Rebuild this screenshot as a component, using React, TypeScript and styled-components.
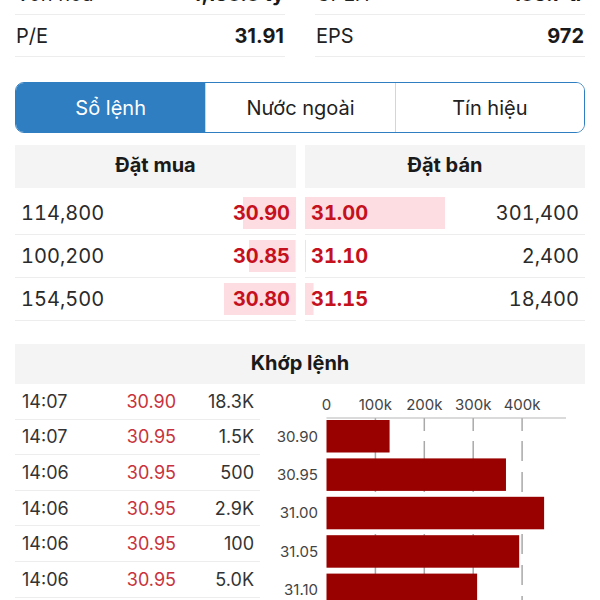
import React from 'react';
import styled, { createGlobalStyle } from 'styled-components';

const GlobalStyle = createGlobalStyle`
  html, body {
    margin: 0;
    padding: 0;
    background: #fff;
    overflow: hidden;
  }
  body {
    font-family: Inter, "Noto Sans", sans-serif;
    color: #222;
  }
`;

type Level = { price: string; volume: number };
type Match = { time: string; price: string; volume: string };

const stats = [
  [
    { label: 'Vốn hóa', value: '4,153.3 tỷ' },
    { label: 'CPLH', value: '135.7 tr' },
  ],
  [
    { label: 'P/E', value: '31.91' },
    { label: 'EPS', value: '972' },
  ],
];

const tabs = ['Sổ lệnh', 'Nước ngoài', 'Tín hiệu'];

const bids: Level[] = [
  { price: '30.90', volume: 114800 },
  { price: '30.85', volume: 100200 },
  { price: '30.80', volume: 154500 },
];

const asks: Level[] = [
  { price: '31.00', volume: 301400 },
  { price: '31.10', volume: 2400 },
  { price: '31.15', volume: 18400 },
];

const matches: Match[] = [
  { time: '14:07', price: '30.90', volume: '18.3K' },
  { time: '14:07', price: '30.95', volume: '1.5K' },
  { time: '14:06', price: '30.95', volume: '500' },
  { time: '14:06', price: '30.95', volume: '2.9K' },
  { time: '14:06', price: '30.95', volume: '100' },
  { time: '14:06', price: '30.95', volume: '5.0K' },
];

const histogram = [
  { price: '30.90', volume: 129000 },
  { price: '30.95', volume: 367000 },
  { price: '31.00', volume: 445000 },
  { price: '31.05', volume: 394000 },
  { price: '31.10', volume: 308000 },
  { price: '31.15', volume: 120000 },
];

const Page = styled.div`
  margin-top: -27px;
  padding: 0 15px;
`;

const StatsGrid = styled.div`
  display: grid;
  grid-template-columns: 1fr 1fr;
  column-gap: 30px;
`;

const StatRow = styled.div`
  display: flex;
  justify-content: space-between;
  align-items: center;
  height: 42px;
  box-sizing: border-box;
  border-bottom: 1px solid #ededed;
  font-size: 20px;
  padding: 0 1px;
`;

const StatLabel = styled.span`
  color: #222;
`;

const StatValue = styled.span`
  font-weight: 700;
  color: #1a1a1a;
`;

const Segmented = styled.div`
  margin-top: 25px;
  display: grid;
  grid-template-columns: repeat(3, 1fr);
  height: 51px;
  box-sizing: border-box;
  border: 1.5px solid #2f7ec1;
  border-radius: 9px;
  overflow: hidden;
`;

const Segment = styled.div<{ $active?: boolean }>`
  display: flex;
  align-items: center;
  justify-content: center;
  font-size: 20px;
  background: ${(p) => (p.$active ? '#2f7ec1' : '#fff')};
  color: ${(p) => (p.$active ? '#fff' : '#222')};
  & + & {
    border-left: 1px solid #cfd6dc;
  }
`;

const BookGrid = styled.div`
  margin-top: 12px;
  display: grid;
  grid-template-columns: 281px 1fr;
  column-gap: 9px;
`;

const SectionHeader = styled.div<{ $height: number }>`
  height: ${(p) => p.$height}px;
  box-sizing: border-box;
  padding-bottom: 3px;
  background: #f4f4f4;
  display: flex;
  align-items: center;
  justify-content: center;
  font-size: 20px;
  font-weight: 700;
  color: #1a1a1a;
`;

const BookRows = styled.div`
  padding-top: 4px;
`;

const BookRow = styled.div<{ $side: 'buy' | 'sell' }>`
  display: flex;
  justify-content: space-between;
  align-items: center;
  height: 43px;
  box-sizing: border-box;
  padding: 0 6px 1px;
  border-bottom: 1px solid #ededed;
  font-size: 20px;
  font-variant-numeric: tabular-nums;
  background-image: linear-gradient(#fddde1, #fddde1);
  background-repeat: no-repeat;
  background-position: ${(p) => (p.$side === 'buy' ? 'right' : 'left')} 5px;
`;

const Volume = styled.span`
  color: #2a2a2a;
`;

const BookPrice = styled.span`
  font-weight: 700;
  color: #c4111d;
`;

const MatchSection = styled.div`
  margin-top: 23px;
`;

const MatchBody = styled.div`
  display: grid;
  grid-template-columns: 245px 1fr;
`;

const MatchRow = styled.div`
  display: grid;
  grid-template-columns: 81px 80px 1fr;
  align-items: center;
  height: 35.6px;
  box-sizing: border-box;
  border-bottom: 1px solid #ededed;
  font-size: 18px;
  color: #333;
`;

const MatchTime = styled.span`
  padding-left: 7px;
`;

const MatchPrice = styled.span`
  text-align: right;
  color: #c8323c;
`;

const MatchVolume = styled.span`
  text-align: right;
  padding-right: 6px;
`;

const ChartBox = styled.div`
  height: 217px;
  overflow: hidden;
  svg {
    display: block;
  }
`;

const X0 = 66.5;
const PX_PER_K = 0.489;

const VolumeChart: React.FC = () => {
  const ticks = [0, 100, 200, 300, 400];
  return (
    <ChartBox>
      <svg width="325" height="260" viewBox="0 0 325 260">
        {ticks.slice(1).map((t) => {
          const x = X0 + t * PX_PER_K;
          return (
            <g key={t} stroke="#a9a9a9" strokeWidth="1.5">
              <line x1={x} y1={34} x2={x} y2={47} />
              <line x1={x} y1={57} x2={x} y2={260} strokeDasharray="20 11" />
            </g>
          );
        })}
        <line x1={X0} y1={34} x2={306} y2={34} stroke="#b5b5b5" strokeWidth="1.2" />
        {ticks.map((t) => (
          <text
            key={t}
            x={X0 + t * PX_PER_K}
            y={26}
            textAnchor="middle"
            fontSize="15"
            fill="#444"
            fontFamily="Inter, sans-serif"
          >
            {t === 0 ? '0' : `${t}k`}
          </text>
        ))}
        {histogram.map((h, i) => {
          const y = 36 + i * 38.4;
          return (
            <g key={h.price}>
              <rect
                x={X0}
                y={y}
                width={(h.volume / 1000) * PX_PER_K}
                height={32.5}
                fill="#990000"
              />
              <text
                x={58}
                y={y + 21.5}
                textAnchor="end"
                fontSize="15"
                fill="#444"
                fontFamily="Inter, sans-serif"
              >
                {h.price}
              </text>
            </g>
          );
        })}
      </svg>
    </ChartBox>
  );
};

const depthWidth = (volume: number) => Math.max(1, volume * 0.000465);

export default function App() {
  return (
    <>
      <GlobalStyle />
      <Page>
        <StatsGrid>
          {stats.map((row) =>
            row.map((s) => (
              <StatRow key={s.label}>
                <StatLabel>{s.label}</StatLabel>
                <StatValue>{s.value}</StatValue>
              </StatRow>
            ))
          )}
        </StatsGrid>

        <Segmented>
          {tabs.map((t, i) => (
            <Segment key={t} $active={i === 0}>
              {t}
            </Segment>
          ))}
        </Segmented>

        <BookGrid>
          <div>
            <SectionHeader $height={43}>Đặt mua</SectionHeader>
            <BookRows>
              {bids.map((b) => (
                <BookRow
                  key={b.price}
                  $side="buy"
                  style={{ backgroundSize: `${depthWidth(b.volume)}px 32px` }}
                >
                  <Volume>{b.volume.toLocaleString('en-US')}</Volume>
                  <BookPrice>{b.price}</BookPrice>
                </BookRow>
              ))}
            </BookRows>
          </div>
          <div>
            <SectionHeader $height={43}>Đặt bán</SectionHeader>
            <BookRows>
              {asks.map((a) => (
                <BookRow
                  key={a.price}
                  $side="sell"
                  style={{ backgroundSize: `${depthWidth(a.volume)}px 32px` }}
                >
                  <BookPrice>{a.price}</BookPrice>
                  <Volume>{a.volume.toLocaleString('en-US')}</Volume>
                </BookRow>
              ))}
            </BookRows>
          </div>
        </BookGrid>

        <MatchSection>
          <SectionHeader $height={40}>Khớp lệnh</SectionHeader>
          <MatchBody>
            <div>
              {matches.map((m, i) => (
                <MatchRow key={i}>
                  <MatchTime>{m.time}</MatchTime>
                  <MatchPrice>{m.price}</MatchPrice>
                  <MatchVolume>{m.volume}</MatchVolume>
                </MatchRow>
              ))}
            </div>
            <VolumeChart />
          </MatchBody>
        </MatchSection>
      </Page>
    </>
  );
}
